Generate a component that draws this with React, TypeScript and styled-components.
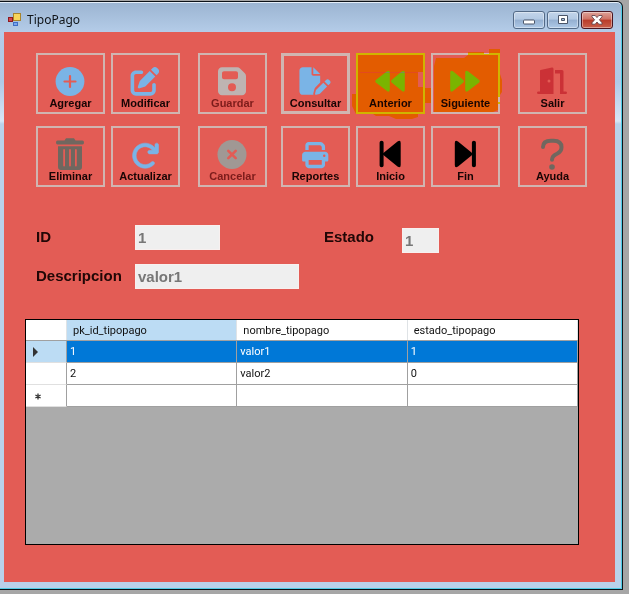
import React from 'react';
import styled, { createGlobalStyle } from 'styled-components';
import {
  FaPenToSquare, FaFloppyDisk, FaFilePen, FaArrowRotateRight, FaPrint,
} from 'react-icons/fa6';

const GlobalStyle = createGlobalStyle`
  * { box-sizing: border-box; }
  body { margin: 0; background: #a6a6a6; }
`;

const Desktop = styled.div`
  display: flex;
  min-height: 100vh;
  padding: 1px 6px 4px 0;
  background: #a6a6a6;
  font-family: "Liberation Sans", Arial, sans-serif;
`;

const Window = styled.div`
  flex: 1;
  display: flex;
  flex-direction: column;
  border: 1px solid #0d1218;
  border-left: 0;
  border-radius: 0 6px 0 0;
  background: linear-gradient(#9bb4d1 0, #b4cce8 30px, #b0c9e6 80px, #d8e6f6 119px, #b9d1ea 122px, #b9d1ea 100%);
  box-shadow: inset -1px -1px 0 #4fcde6, inset 0 1px 0 #e4eef8;
`;

const TitleBar = styled.header`
  display: flex;
  align-items: center;
  height: 30px;
  padding: 6px 9px 0 8px;
  gap: 6px;
`;

const Title = styled.h1`
  flex: 1;
  margin: 0;
  font: 400 12px/18px "Noto Sans", "Open Sans", sans-serif;
  color: #101418;
`;

const Captions = styled.div`
  display: flex;
  gap: 2px;
`;

const CaptionButton = styled.button<{ $close?: boolean }>`
  display: grid;
  place-items: center;
  width: 32px;
  height: 18px;
  padding: 0;
  border: 1px solid ${p => (p.$close ? '#4a1520' : '#536a87')};
  border-radius: 3px;
  background: ${p => (p.$close
    ? 'linear-gradient(#dda298 0%, #cf7365 45%, #b93b29 50%, #c9604c 100%)'
    : 'linear-gradient(#c3d5ea 0%, #b3c9e3 45%, #94afd0 50%, #aec9e7 100%)')};
  box-shadow: inset 0 0 0 1px rgba(255, 255, 255, 0.4);
`;

const Client = styled.main`
  flex: 1;
  display: flex;
  flex-direction: column;
  margin: 0 7px 7px 4px;
  padding: 21px 0 37px;
  background: #e35c55;
`;

const Toolbar = styled.nav`
  display: flex;
  align-items: flex-start;
  gap: 18px;
  padding: 0 28px 0 32px;
`;

const Cluster = styled.div`
  display: flex;
  gap: 14px;
`;

const Group = styled.div<{ $columns: number }>`
  position: relative;
  display: grid;
  grid-template-columns: repeat(${p => p.$columns}, 69px);
  gap: 12px 6px;
`;

const ToolButton = styled.button<{ $tone: string; $strong?: boolean }>`
  display: flex;
  flex-direction: column;
  align-items: center;
  height: 61px;
  padding: 0;
  border: 0;
  box-shadow: inset 0 0 0 ${p => (p.$strong ? 3 : 2)}px #d0b5b1;
  background: transparent;
  color: #180505;
  font: 700 11px/12px "Liberation Sans", Arial, sans-serif;

  svg {
    flex: none;
    width: 32px;
    height: 32px;
    margin: 12px 1px 0 0;
    color: ${p => p.$tone};
  }

  &:disabled { color: #7c1c1b; }
`;

const Marker = styled.svg`
  position: absolute;
  left: 64px;
  top: -8px;
  width: 165px;
  height: 80px;
  pointer-events: none;
  mix-blend-mode: multiply;
`;

const Form = styled.form`
  display: grid;
  grid-template-columns: 99px 189px 78px auto;
  justify-content: start;
  gap: 11px 0;
  margin-top: 38px;
  padding: 0 32px;
`;

const Label = styled.label`
  font: 700 15px/24px "Liberation Sans", Arial, sans-serif;
  color: #210706;
`;

const Field = styled.input<{ $width: number; $low?: boolean }>`
  align-self: ${p => (p.$low ? 'end' : 'start')};
  width: ${p => p.$width}px;
  height: 25px;
  padding: 0 2px 1px;
  border: 1px solid #f8f0ef;
  border-radius: 0;
  background: #efefef;
  color: #777;
  font: 700 15px/22px "Liberation Sans", Arial, sans-serif;
`;

const FirstRow = styled.div`
  display: contents;

  ${Label} { height: 28px; }
`;

const DataGrid = styled.section`
  flex: 1;
  margin: 30px 36px 0 21px;
  min-height: 120px;
  border: 1px solid #000;
  background: #ababab;
`;

const Table = styled.table`
  width: 100%;
  table-layout: fixed;
  border-collapse: separate;
  border-spacing: 0;
  font: 400 12px/14px Roboto, "Liberation Sans", sans-serif;
  color: #111;
`;

const HeadCell = styled.th<{ $current?: boolean }>`
  height: 21px;
  padding: 1px 6px 0;
  border: solid #a0a0a0;
  border-width: 0 0 1px;
  box-shadow: inset -1px 0 0 #dfe3e6;
  background: ${p => (p.$current ? '#bcdcf4' : '#fff')};
  font-weight: 400;
  font-size: 11px;
  text-align: left;

  &:first-child { width: 41px; }
`;

const RowHead = styled.th<{ $current?: boolean }>`
  height: 22px;
  padding: 0 6px;
  border: solid #a0a0a0;
  border-width: 0 1px 1px 0;
  border-bottom-color: #e0e0e0;
  background: ${p => (p.$current ? '#bcdcf4' : '#fff')};
  text-align: left;

  svg { display: block; }
`;

const Cell = styled.td<{ $selected?: boolean }>`
  height: 22px;
  padding: 0 3px;
  border: solid #a0a0a0;
  border-width: 0 1px 1px 0;
  background: ${p => (p.$selected ? '#0078d7' : '#fff')};
  color: ${p => (p.$selected ? '#fff' : '#111')};
  font-size: 11px;
`;

const BLUE = '#7ab4e6';
const GREY = '#70675f';
const BLACK = '#000';

const Solid = ({ children }: { children: React.ReactNode }) => (
  <svg viewBox="0 0 32 32" fill="currentColor" aria-hidden="true">{children}</svg>
);

const PlusIcon = () => (
  <Solid>
    <circle cx="16" cy="16.500" r="14.400" />
    <path d="M16 11v11M10.500 16.500h11" stroke="#e35c55" strokeWidth="2.200" strokeLinecap="round" />
  </Solid>
);

const CancelIcon = () => (
  <Solid>
    <circle cx="16" cy="16.500" r="14.500" />
    <path d="M12.300 12.800l7.400 7.400M19.700 12.800l-7.400 7.400" stroke="#e35c55" strokeWidth="2.600" strokeLinecap="round" />
  </Solid>
);

const TrashIcon = () => (
  <Solid>
    <path fillRule="evenodd" d="M3.500 2.500h7L12 .300h8l1.500 2.200h7q1.500 0 1.500 2t-1.500 2h-25Q2 6.500 2 4.500t1.500-2zM4 8.300h24v20.500q0 3.200-3 3.200H7q-3 0-3-3.200zM9.200 12v15.500q0 .900.900.900t.900-.900V12q0-.900-.900-.900t-.900.900zm5.900 0v15.500q0 .900.900.900t.900-.900V12q0-.900-.900-.900t-.900.900zm5.900 0v15.500q0 .900.900.900t.900-.900V12q0-.900-.900-.900t-.900.900z" />
  </Solid>
);

const BackIcon = () => (
  <Solid>
    <path d="M1.800 15L13 6.300q2.800-1.700 2.800 1.500v16.800q0 3.200-2.800 1.500L1.800 17.400q-1.200-1.200 0-2.400zM17.600 15L28 6.300q2.800-1.700 2.800 1.500v16.800q0 3.200-2.800 1.500L17.600 17.400q-1.200-1.200 0-2.400z" />
  </Solid>
);

const NextIcon = () => (
  <Solid>
    <path d="M30.200 15L19 6.300q-2.800-1.700-2.800 1.500v16.800q0 3.200 2.800 1.500l11.200-8.700q1.200-1.200 0-2.400zM14.400 15L4 6.300Q1.200 4.600 1.200 7.800v16.800q0 3.200 2.800 1.500l10.400-8.700q1.200-1.200 0-2.400z" />
  </Solid>
);

const FirstIcon = () => (
  <Solid>
    <path d="M5.600 4.500q0-1.800 2-1.800t2 1.800v23q0 1.800-2 1.800t-2-1.800zM10 14.500L23.500 3.400q3.200-2 3.200 1.600v22q0 3.600-3.200 1.600L10 17.500q-1.500-1.500 0-3z" />
  </Solid>
);

const LastIcon = () => (
  <Solid>
    <path d="M26.900 4.500q0-1.800-2-1.800t-2 1.800v23q0 1.800 2 1.800t2-1.800zM22.500 14.500L9 3.400Q5.800 1.400 5.800 5v22q0 3.600 3.200 1.600l13.500-11.100q1.500-1.500 0-3z" />
  </Solid>
);

const DoorIcon = () => (
  <Solid>
    <path fillRule="evenodd" d="M4.500 5L16 2.500q1.500-.300 1.500 1.500v25H2.500q-1.500 0-1.500-1.200t1.500-1.300h1.500V5.500zM13 14.500q-1.500 0-1.500 1.500t1.500 1.500 1.500-1.500-1.500-1.500zM19 5h7q1.500 0 1.500 1.500v20h2q1.500 0 1.500 1.300T29.500 29H24V8.500h-5z" />
  </Solid>
);

const QuestionIcon = () => (
  <Solid>
    <path d="M7 9q0-6.300 8-6.300h2.500q8 0 8 6.600 0 4.200-4.500 6.400-5 2.300-5 6" fill="none" stroke="currentColor" strokeWidth="4" strokeLinecap="round" />
    <circle cx="16" cy="29" r="2.800" />
  </Solid>
);

type Tool = { label: string; icon: React.ReactNode; tone: string; disabled?: boolean; strong?: boolean };

const groups: Record<'edit' | 'save' | 'browse' | 'leave', Tool[]> = {
  edit: [
    { label: 'Agregar', icon: <PlusIcon />, tone: BLUE },
    { label: 'Modificar', icon: <FaPenToSquare viewBox="-28 -32 568 568" />, tone: BLUE },
    { label: 'Eliminar', icon: <TrashIcon />, tone: GREY },
    { label: 'Actualizar', icon: <FaArrowRotateRight viewBox="-32 -60 572 572" stroke="currentColor" strokeWidth="10" />, tone: BLUE },
  ],
  save: [
    { label: 'Guardar', icon: <FaFloppyDisk viewBox="-32 -4 512 512" />, tone: '#beb4b2', disabled: true },
    { label: 'Cancelar', icon: <CancelIcon />, tone: '#a09894', disabled: true },
  ],
  browse: [
    { label: 'Consultar', icon: <FaFilePen viewBox="-8 -40 592 592" />, tone: BLUE, strong: true },
    { label: 'Anterior', icon: <BackIcon />, tone: BLUE },
    { label: 'Siguiente', icon: <NextIcon />, tone: BLUE },
    { label: 'Reportes', icon: <FaPrint viewBox="-60 -76 624 624" />, tone: BLUE },
    { label: 'Inicio', icon: <FirstIcon />, tone: BLACK },
    { label: 'Fin', icon: <LastIcon />, tone: BLACK },
  ],
  leave: [
    { label: 'Salir', icon: <DoorIcon />, tone: '#cb3136' },
    { label: 'Ayuda', icon: <QuestionIcon />, tone: GREY },
  ],
};

const Tools = ({ items }: { items: Tool[] }) => (
  <>
    {items.map(t => (
      <ToolButton key={t.label} type="button" $tone={t.tone} $strong={t.strong} disabled={t.disabled}>
        {t.icon}
        {t.label}
      </ToolButton>
    ))}
  </>
);

const rows = [
  ['1', 'valor1', '1'],
  ['2', 'valor2', '0'],
];

export default function App() {
  return (
    <Desktop>
      <GlobalStyle />
      <Window>
        <TitleBar>
          <svg width="13" height="16" viewBox="0 0 13 16" aria-hidden="true">
            <rect x="5.500" y="1.500" width="7" height="7" fill="#f7d55b" stroke="#a8842c" />
            <rect x="0.500" y="5.500" width="4" height="4" fill="#d5454a" stroke="#8e1a20" />
            <rect x="5.500" y="10.500" width="4" height="3" fill="#78a5ec" stroke="#3f6ec6" />
          </svg>
          <Title>TipoPago</Title>
          <Captions>
            <CaptionButton type="button" aria-label="Minimizar">
              <svg width="12" height="16" viewBox="0 0 12 16"><rect x="0.500" y="8" width="11" height="4" rx="1" fill="#fff" stroke="#4a5568" /></svg>
            </CaptionButton>
            <CaptionButton type="button" aria-label="Maximizar">
              <svg width="12" height="16" viewBox="0 0 12 16"><path d="M1.500 3.500h9v8h-9zM4.500 6.500v2h3v-2z" fill="#fff" fillRule="evenodd" stroke="#4a5568" /></svg>
            </CaptionButton>
            <CaptionButton type="button" aria-label="Cerrar" $close>
              <svg width="12" height="16" viewBox="0 0 12 16"><path d="M1 3.500h3.200L6 5.600l1.800-2.100H11v1.300L8.400 7.800l2.600 3v1.400H7.800L6 10l-1.800 2.200H1v-1.400l2.600-3L1 4.800z" fill="#fff" stroke="#553a42" strokeWidth="0.800" /></svg>
            </CaptionButton>
          </Captions>
        </TitleBar>
        <Client>
          <Toolbar>
            <Group $columns={2}><Tools items={groups.edit} /></Group>
            <Cluster>
              <Group $columns={1}><Tools items={groups.save} /></Group>
              <Group $columns={3}>
                <Tools items={groups.browse} />
                <Marker viewBox="345 45 165 80" aria-hidden="true">
                  <path
                    fill="#ffff00"
                    fillRule="evenodd"
                    d="M356 53H425V88H431V103H425V114H418V117L412 119H396L389 116H376L373 114H356L352 106V94H356z
                       M418 72V87H423V72z
                       M436 58H464L468 55V52H484V54H489V49H500V74L502 80V92L500 95V97H498V102H500V104H498V110L493 112H434V66z"
                  />
                  <path d="M360 72.500H418" stroke="#ff9cb0" strokeOpacity="0.500" />
                </Marker>
              </Group>
            </Cluster>
            <Group $columns={1}><Tools items={groups.leave} /></Group>
          </Toolbar>
          <Form>
            <FirstRow>
              <Label htmlFor="id">ID</Label>
              <Field id="id" $width={85} defaultValue="1" disabled />
              <Label htmlFor="estado">Estado</Label>
              <Field id="estado" $width={37} $low defaultValue="1" disabled />
            </FirstRow>
            <Label htmlFor="descripcion">Descripcion</Label>
            <Field id="descripcion" $width={164} defaultValue="valor1" disabled />
          </Form>
          <DataGrid>
            <Table>
              <thead>
                <tr>
                  <HeadCell aria-label="Fila" />
                  <HeadCell $current>pk_id_tipopago</HeadCell>
                  <HeadCell>nombre_tipopago</HeadCell>
                  <HeadCell>estado_tipopago</HeadCell>
                </tr>
              </thead>
              <tbody>
                {rows.map((row, i) => (
                  <tr key={row[0]}>
                    <RowHead $current={i === 0} scope="row">
                      {i === 0 && <svg width="6" height="10" viewBox="0 0 6 10"><path d="M1 0l5 5-5 5z" fill="#333" /></svg>}
                    </RowHead>
                    {row.map((value, c) => <Cell key={c} $selected={i === 0}>{value}</Cell>)}
                  </tr>
                ))}
                <tr>
                  <RowHead scope="row">
                    <svg width="12" height="8" viewBox="0 0 12 8"><path d="M6 1.500v6M3.400 3l5.200 3M8.600 3l-5.200 3" stroke="#333" strokeWidth="1.300" /></svg>
                  </RowHead>
                  <Cell /><Cell /><Cell />
                </tr>
              </tbody>
            </Table>
          </DataGrid>
        </Client>
      </Window>
    </Desktop>
  );
}
